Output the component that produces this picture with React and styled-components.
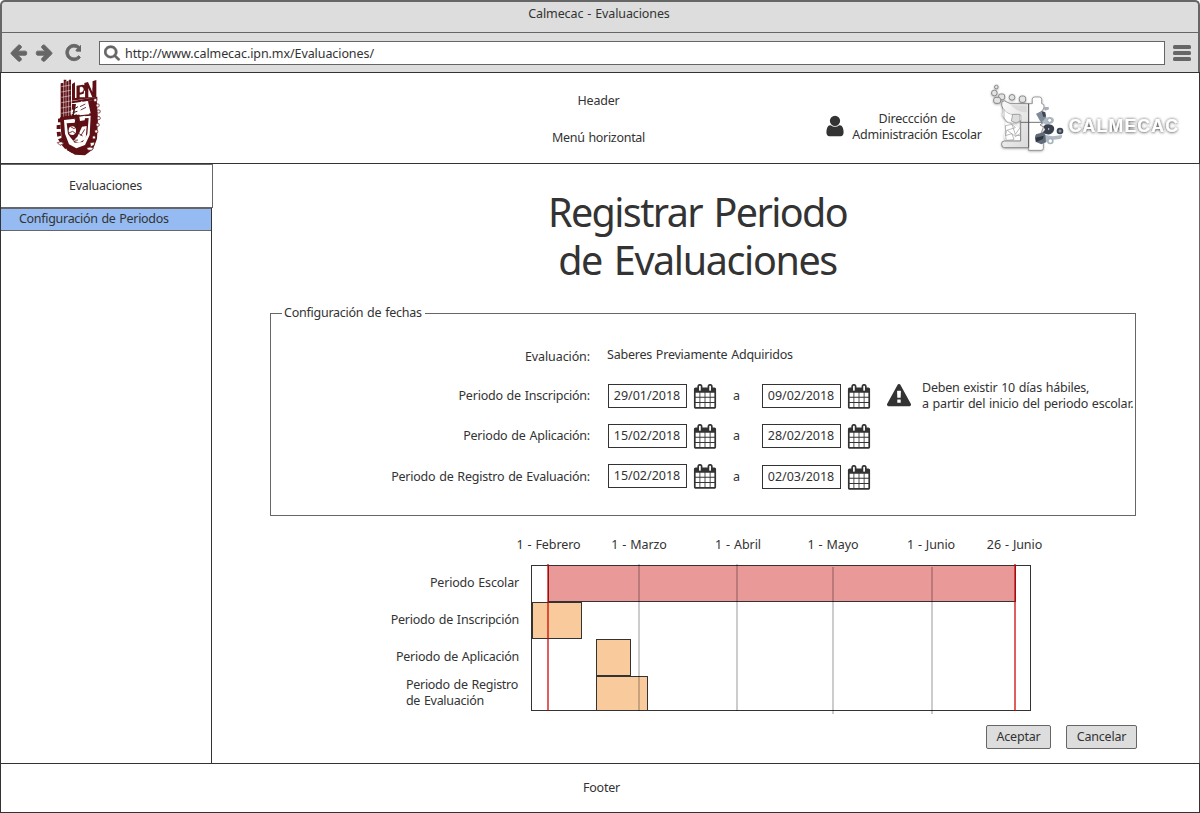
import React from 'react';
import styled, { createGlobalStyle } from 'styled-components';

const INK = '#333333';
const CHROME = '#666666';

const GlobalStyle = createGlobalStyle`
  *, *::before, *::after { box-sizing: border-box; }
  html, body { margin: 0; padding: 0; background: #fff; overflow: hidden; }
  body {
    font-family: "Noto Sans", sans-serif;
    font-size: 12.5px;
    line-height: 16px;
    color: ${INK};
  }
  svg { display: block; flex: none; }
`;

const Window = styled.div`
  width: 1200px;
  height: 813px;
  display: flex;
  flex-direction: column;
`;

const Text = styled.span`
  white-space: nowrap;
  letter-spacing: ${(p) => p.$ls ?? -0.22}px;
  word-spacing: 0.8px;
`;

const Chrome = styled.div`
  height: 72px;
  background: #dddddd;
  border: 2px solid ${CHROME};
  border-bottom: 0;
  border-radius: 5px 5px 0 0;
`;

const TitleBar = styled.div`
  height: 31px;
  border-bottom: 1px solid ${CHROME};
  padding: 4px 2px 0 0;
  display: flex;
  justify-content: center;
  align-items: flex-start;
`;

const Toolbar = styled.div`
  height: 39px;
  padding: 8px 6px 0 7px;
  display: flex;
  align-items: flex-start;
`;

const NavIcons = styled.div`
  width: 90px;
  padding-top: 2px;
  display: flex;
  gap: 7px;
  color: ${CHROME};
`;

const AddressBar = styled.div`
  flex: none;
  width: 1066px;
  height: 24px;
  background: #fff;
  border: 1px solid ${CHROME};
  display: flex;
  align-items: flex-start;
  padding: 3px 0 0 4px;
  color: ${INK};
  gap: 4px;
  & > svg { color: ${CHROME}; }
  & > span { padding-top: 1px; }
`;

const MenuButton = styled.div`
  margin-left: 8px;
  padding-top: 4px;
  display: flex;
  flex-direction: column;
  gap: 2px;
`;

const MenuBar = styled.i`
  width: 18px;
  height: 4px;
  border-radius: 1.5px;
  background: ${CHROME};
`;

const Header = styled.header`
  height: 92px;
  border: 1px solid ${INK};
  display: flex;
  align-items: flex-start;
`;

const LogoSlot = styled.div`
  width: 497px;
  padding: 4px 0 0 54px;
`;

const HeaderTitles = styled.div`
  width: 201px;
  padding-top: 20px;
  display: flex;
  flex-direction: column;
  align-items: center;
  gap: 21px;
`;

const UserBox = styled.div`
  padding: 38px 0 0 124px;
  width: 289px;
  display: flex;
  gap: 6px;
  & > svg { margin-top: 3px; }
`;

const UserName = styled.div`
  display: flex;
  flex-direction: column;
  align-items: center;
  width: 128px;
`;

const BrandSlot = styled.div`
  padding-top: 7px;
`;

const Body = styled.div`
  height: 599px;
  display: flex;
  border-right: 1px solid ${CHROME};
`;

const Sidebar = styled.nav`
  width: 212px;
  height: 599px;
  border-left: 1px solid ${INK};
  border-right: 1px solid ${INK};
`;

const SideHeading = styled.div`
  width: 212px;
  height: 44px;
  background: #fff;
  border: 1px solid ${CHROME};
  border-left: 0;
  display: flex;
  justify-content: center;
  padding: 13px 2px 0 0;
`;

const SideItem = styled.div`
  height: 23px;
  background: #95bbf2;
  border-top: 1px solid ${CHROME};
  border-bottom: 1px solid ${CHROME};
  padding: 2px 0 0 18px;
`;

const Main = styled.main`
  flex: 1;
  padding: 24px 0 0 58px;
`;

const PageTitle = styled.h1`
  margin: 0 0 21px;
  width: 855px;
  font-weight: 400;
  font-size: 39.5px;
  line-height: 48px;
  text-align: center;
`;

const TitleLine = styled.span`
  display: block;
  letter-spacing: ${(p) => p.$ls}px;
  word-spacing: 3px;
`;

const DateFieldset = styled.fieldset`
  width: 866px;
  height: 211px;
  margin: 0;
  padding: 0 0 0 11px;
  border: 1px solid ${CHROME};
  min-width: 0;
`;

const Legend = styled.legend`
  padding: 0 3px 0 2px;
  height: 16px;
`;

const FormRow = styled.div`
  display: flex;
  align-items: flex-start;
  height: ${(p) => p.$h}px;
`;

const FieldLabel = styled.div`
  width: 308px;
  text-align: right;
  padding-top: ${(p) => p.$top ?? 4}px;
`;

const FieldValue = styled.div`
  margin-left: 17px;
  padding-top: 26px;
`;

const DateField = styled.div`
  display: flex;
  gap: 6px;
  margin-left: ${(p) => p.$left}px;
  padding-top: ${(p) => p.$drop ?? 0}px;
`;

const DateInput = styled.div`
  width: 79px;
  height: 24px;
  border: 1px solid ${INK};
  padding: 3px 1px 0 0;
  text-align: center;
`;

const Until = styled.div`
  width: 9px;
  margin-left: 16px;
  padding-top: ${(p) => p.$top ?? 4}px;
`;

const Warning = styled.div`
  display: flex;
  margin-left: 16px;
  gap: 11px;
`;

const WarningText = styled.div`
  display: flex;
  flex-direction: column;
  margin-top: -4px;
`;

const Axis = styled.div`
  display: grid;
  grid-template-columns: 85px 96px 102px 88px 108px 59px;
  margin: 21px 0 11px 236px;
  text-align: center;
`;

const ChartArea = styled.div`
  display: flex;
  gap: 12px;
`;

const ChartLabels = styled.div`
  width: 249px;
  display: flex;
  flex-direction: column;
  align-items: flex-end;
  padding-top: 11px;
  gap: 21px;
`;

const TwoLineLabel = styled.div`
  display: flex;
  flex-direction: column;
  align-items: flex-start;
  margin: -9px 1px 0 0;
`;

const Actions = styled.div`
  display: flex;
  justify-content: flex-end;
  gap: 15px;
  width: 867px;
  margin-top: 11px;
`;

const Button = styled.div`
  width: ${(p) => p.$w}px;
  height: 24px;
  border: 1px solid ${CHROME};
  border-radius: 2px;
  background: #dddddd;
  text-align: center;
  padding-top: 3px;
`;

const Footer = styled.footer`
  height: 50px;
  border: 1px solid ${INK};
  display: flex;
  justify-content: center;
  padding: 16px 0 0 3px;
`;

const PATHS = {
  arrow:
    'M1664 896v128q0 53-32.5 90.5t-84.5 37.5h-704l293 294q38 36 38 90t-38 90l-75 76q-37 37-90 37-52 0-91-37l-651-652q-37-37-37-90 0-52 37-91l651-650q38-38 91-38 52 0 90 38l75 74q38 38 38 91t-38 91l-293 293h704q52 0 84.5 37.5t32.5 90.5z',
  reload:
    'M1664 256v448q0 26-19 45t-45 19h-448q-42 0-59-40-17-39 14-69l138-138q-148-137-349-137-104 0-198.5 40.5t-163.5 109.5-109.5 163.5-40.5 198.5 40.5 198.5 109.5 163.5 163.5 109.5 198.5 40.5q119 0 225-52t179-147q7-10 23-12 15 0 25 9l137 138q9 8 9.5 20.5t-7.5 22.5q-109 132-264 204.5t-327 72.5q-156 0-298-61t-245-164-164-245-61-298 61-298 164-245 245-164 298-61q147 0 284.5 55.5t244.5 156.5l130-129q29-31 70-14 39 17 39 59z',
  search:
    'M1216 832q0-185-131.5-316.5t-316.5-131.5-316.5 131.5-131.5 316.5 131.5 316.5 316.5 131.5 316.5-131.5 131.5-316.5zm512 832q0 52-38 90t-90 38q-54 0-90-38l-343-342q-179 124-399 124-143 0-273.5-55.5t-225-150-150-225-55.5-273.5 55.5-273.5 150-225 225-150 273.5-55.5 273.5 55.5 225 150 150 225 55.5 273.5q0 220-124 399l343 343q37 37 37 90z',
  calendar:
    'M192 1664h288v-288h-288v288zm352 0h320v-288h-320v288zm-352-352h288v-320h-288v320zm352 0h320v-320h-320v320zm-352-384h288v-288h-288v288zm736 736h320v-288h-320v288zm-384-736h320v-288h-320v288zm768 736h288v-288h-288v288zm-384-352h320v-320h-320v320zm-352-864v-288q0-13-9.5-22.5t-22.5-9.5h-64q-13 0-22.5 9.5t-9.5 22.5v288q0 13 9.5 22.5t22.5 9.5h64q13 0 22.5-9.5t9.5-22.5zm736 864h288v-320h-288v320zm-384-384h320v-288h-320v288zm384 0h288v-288h-288v288zm32-480v-288q0-13-9.5-22.5t-22.5-9.5h-64q-13 0-22.5 9.5t-9.5 22.5v288q0 13 9.5 22.5t22.5 9.5h64q13 0 22.5-9.5t9.5-22.5zm384-64v1280q0 52-38 90t-90 38h-1408q-52 0-90-38t-38-90v-1280q0-52 38-90t90-38h128v-96q0-66 47-113t113-47h64q66 0 113 47t47 113v96h384v-96q0-66 47-113t113-47h64q66 0 113 47t47 113v96h128q52 0 90 38t38 90z',
  warning:
    'M1024 1375v-190q0-14-9.5-23.5t-22.5-9.5h-192q-13 0-22.5 9.5t-9.5 23.5v190q0 14 9.5 23.5t22.5 9.5h192q13 0 22.5-9.5t9.5-23.5zm-2-374l18-459q0-12-10-19-13-11-24-11h-220q-11 0-24 11-10 7-10 21l17 457q0 10 10 16.5t24 6.5h185q14 0 23.5-6.5t10.5-16.5zm-14-934l768 1408q35 63-2 126-17 29-46.5 46t-63.5 17h-1536q-34 0-63.5-17t-46.5-46q-37-63-2-126l768-1408q17-31 47-49t65-18 65 18 47 49z',
  user:
    'M1536 1399q0 109-62.5 187t-150.5 78h-854q-88 0-150.5-78t-62.5-187q0-85 8.5-160.5t31.5-152 58.5-131 94-89 134.5-34.5q131 128 313 128t313-128q76 0 134.5 34.5t94 89 58.5 131 31.5 152 8.5 160.5zm-256-887q0 159-112.5 271.5t-271.5 112.5-271.5-112.5-112.5-271.5 112.5-271.5 271.5-112.5 271.5 112.5 112.5 271.5z',
};

const Icon = ({ name, w = 18, h = 18, box = '0 0 1792 1792', flip, bold = 0 }) => (
  <svg width={w} height={h} viewBox={box} fill="currentColor" stroke="currentColor" strokeWidth={bold} strokeLinejoin="round" preserveAspectRatio="none">
    <path d={PATHS[name]} transform={flip ? 'translate(1792 0) scale(-1 1)' : undefined} />
  </svg>
);

const Calendar = () => <Icon name="calendar" w={24} h={25} box="-6 0 1803 1810" />;

const rightTeeth = [[170, 88], [177, 104], [180, 122], [180, 142], [177, 162], [173, 182], [166, 200]];

const IpnLogo = () => (
  <svg width="47" height="80" viewBox="45 21 141 240">
    <g fill="#5e1014">
      {/* tower */}
      <path d="M62 40l9-2v-9h8v6l8-4v-2h6v112l-31 8z" />
      {/* monogram block */}
      <path d="M96 42l9-5v46h4V47l20-3q9 1 8 15-1 11-9 13l-9 2v8h14V39l11-3 13 30V34l12-4v52l-73 10z" />
      <path d="M95 94l77-14v9l-77 11z" />
      {/* gear body */}
      <path d="M60 142l34-4 2-36 12 0-6 34 50-6-8-36 26-8 4 60-3 60-12 32-24 18-30-2-24-14-16-30z" />
      <path d="M54 146l10-2v13h-10zM50 166l12-2v13h-12zM50 186l12-1 1 12-11 3zM54 208l12-5 7 11-10 7zM65 225l11-8 9 10-9 11zM81 240l10-12 10 7-5 14zM103 248l2-14h12l1 15-10 4zM125 250l-2-14 11-3 7 12z" />
      <path d="M142 242l-5-12 10-6 9 10z" />
    </g>
    <g stroke="#fff" strokeWidth="1.5" fill="none">
      <path d="M71 34v106M78 34v104M86 30v108M64 50l28-5M64 66l28-5M64 82l28-5M64 98l28-5M64 114l28-5M64 130l28-5" />
      <path d="M107 46v38M133.500 62v20" strokeWidth="3.500" />
      <path d="M120 52v15l5-1q5-2 5-8t-5-7z" fill="#fff" />
      <path d="M145 54l12 28h-12zM148 34l9 20v-22z" fill="#fff" stroke="none" />
    </g>
    <g fill="#fff">
      <path d="M112 118l4-18 10-7 4 10 10-10 6 28 2 12-28 3-8-10z" />
      <path d="M72 150l34-4-2 12-24 2 4 32 20 26 24-2 14-24 4-48-12 1v-6l18-2-3 58-14 30-26 10-22-12-12-32z" />
      <ellipse cx="97" cy="182" rx="11" ry="13" />
      <path d="M112 200l14-30 14-2-3 38-19 12-18-6z" />
      <path d="M118 140l18-3-2 14-14 2zM92 122l8-4-2 14-6 2z" />
    </g>
    <g fill="none" stroke="#5e1014" strokeWidth="2.5">
      <path d="M84 190l14-6 8 6-6 14M92 170l10 6 12-10M104 150l8-10M120 110l16-8M122 120l16-8M118 166l-2 24 12 8M90 198q10 16 24 12M134 178l-12 20" />
    </g>
    <path d="M100 118l14-8M98 128l14-4M96 140l14-6M108 150l6 8-4 14" fill="none" stroke="#2b1a1a" strokeWidth="3" />
    <g fill="#fff" stroke="#5e1014" strokeWidth="2.2">
      {rightTeeth.map(([x, y]) => (
        <rect key={y} x={x - 9} y={y - 3} width="9" height="9" rx="3" transform={`rotate(-12 ${x} ${y})`} />
      ))}
      <ellipse cx="150" cy="236" rx="9" ry="5" />
      <path d="M150 218l14-2-2 10-10 4zM52 218l12-3 6 6-10 5z" />
    </g>
  </svg>
);

const BrandLogo = () => (
  <svg width="196" height="74" viewBox="24 15 588 222">
    <defs>
      <linearGradient id="stone" x1="0" y1="0" x2="1" y2="1">
        <stop offset="0" stopColor="#fafafa" />
        <stop offset="1" stopColor="#d9d9d9" />
      </linearGradient>
      <filter id="soft" x="-20%" y="-20%" width="140%" height="140%">
        <feDropShadow dx="0" dy="2" stdDeviation="2.4" floodColor="#555" floodOpacity="0.55" />
      </filter>
      <filter id="glow" x="-20%" y="-60%" width="140%" height="220%">
        <feDropShadow dx="0" dy="1" stdDeviation="4" floodColor="#222" floodOpacity="1" />
      </filter>
    </defs>
    <g filter="url(#soft)">
      <g fill="#e2e3e3" stroke="#777" strokeWidth="2.4">
        <circle cx="49" cy="36" r="5.5" />
        <circle cx="43" cy="54" r="8.5" />
        <rect x="56" y="57" width="18" height="17" rx="6" />
        <rect x="41" y="67" width="21" height="18" rx="7" />
        <circle cx="96" cy="67" r="8.5" />
        <rect x="118" y="63" width="19" height="19" rx="7" />
      </g>
      <path
        d="M66 80q8-6 16 2l10 4h54v132H74q-9 0-9-9v-3q0-8 9-8h48v-62q0-14-14-17H92q-14-5-22-15-8-14-4-24z"
        fill="url(#stone)" stroke="#777" strokeWidth="2.4"
      />
      <path d="M146 86h11V73q0-7 7-7h14q7 0 7 7v13q9 0 7 12l-6 10-12 8 6 14 8 12-8 8 10 6-8 22-16 8 4 12 20 4v18q0 6-7 6h-37z" fill="#fff" stroke="#777" strokeWidth="2" />
      <path d="M70 100q10 18 34 20l20 2v14l-26 8-18-4-14-20z" fill="#fff" stroke="#aaa" strokeWidth="1.5" />
      <path d="M98 118h22v20l-12 6-14-6z" fill="#ddd" stroke="#888" strokeWidth="2" />
      <path d="M76 142l12 4 16 6 16 8v36H76l-4-14 6-16z" fill="#fff" />
    </g>
    <path d="M146 86v132M122 142h66" stroke="#4d4d4d" strokeWidth="2.4" fill="none" />
    <path d="M76 152l20-4 10 10-26 8-4 16 20-6 6 18-24 2zM96 148l10 30 14-20M82 166l18 14 20 2M104 186l16-10M72 104v26l10 12" fill="none" stroke="#999" strokeWidth="2" />
    <path d="M92 90l48 2v20q-30 0-48-22z" fill="#d2d2d2" opacity=".7" />
    <g>
      <path d="M168 116l14-6 16 12 2 14-12 10-8-8z" fill="#7e8b98" />
      <path d="M184 108l12 4 2 12-8 2z" fill="#3f4753" />
      <path d="M190 96l16 0 1 7-12 4z" fill="#a4afba" />
      <path d="M186 140l10-10q14-10 24 0 5 9-4 15l-18 6z" fill="#b0bac3" />
      <circle cx="209" cy="136" r="6" fill="#fff" stroke="#8a97a4" strokeWidth="2" />
      <path d="M190 154q10-10 26-4 10 6 5 18-6 12-20 10l-14-4 8-10z" fill="#39414e" />
      <circle cx="206" cy="162" r="2" fill="#fff" />
      <path d="M168 178l22-6 10 12-2 18-14 6-14-6q-9-12-2-24z" fill="#5f6b79" />
      <path d="M167 188l24-6-2 10-22 10z" fill="#2f3641" />
      <path d="M196 180l22 4 28-4q2 8-6 12l-20 2-22 8z" fill="#b0bac3" />
      <circle cx="240" cy="168" r="10" fill="#3b434e" />
      <circle cx="240" cy="168" r="4.5" fill="#89939d" />
      <circle cx="211" cy="198" r="7.5" fill="#fff" stroke="#a7b3bf" strokeWidth="5" />
    </g>
    <text
      x="266" y="171" fontFamily="Liberation Sans, Arial, sans-serif" fontWeight="700" fontSize="53"
      textLength="328" lengthAdjust="spacing" fill="#fff" filter="url(#glow)"
    >
      CALMECAC
    </text>
  </svg>
);

const Gantt = () => (
  <svg width="500" height="150" viewBox="531 564 500 150" shapeRendering="crispEdges">
    <rect x="531.5" y="565.5" width="499" height="145" fill="none" stroke={INK} />
    <rect x="548.5" y="565.5" width="467" height="36" fill="#ea9999" stroke={INK} />
    <g fill="#f9cb9c" stroke={INK}>
      <rect x="532.5" y="602.5" width="49" height="36" />
      <rect x="596.5" y="639.5" width="34" height="36" />
      <rect x="596.5" y="676.5" width="51" height="34" />
    </g>
    <g fill="#000" fillOpacity="0.2">
      <rect x="638" y="564" width="2" height="147" />
      <rect x="736" y="564" width="2" height="147" />
      <rect x="832" y="567" width="2" height="147" />
      <rect x="931" y="567" width="2" height="147" />
    </g>
    <g fill="#cc0000" fillOpacity="0.63">
      <rect x="547" y="564" width="2" height="147" />
      <rect x="1014" y="564" width="2" height="147" />
    </g>
  </svg>
);

const periods = [
  { label: 'Periodo de Inscripción:', from: '29/01/2018', to: '09/02/2018', warn: true },
  { label: 'Periodo de Aplicación:', from: '15/02/2018', to: '28/02/2018' },
  { label: 'Periodo de Registro de Evaluación:', from: '15/02/2018', to: '02/03/2018', drop: 1 },
];

const months = ['1 - Febrero', '1 - Marzo', '1 - Abril', '1 - Mayo', '1 - Junio', '26 - Junio'];

export default function App() {
  return (
    <Window>
      <GlobalStyle />
      <Chrome>
        <TitleBar><Text $ls={-0.1}>Calmecac - Evaluaciones</Text></TitleBar>
        <Toolbar>
          <NavIcons>
            <Icon name="arrow" w={19} h={19} bold={90} />
            <Icon name="arrow" w={19} h={19} bold={90} flip />
            <Icon name="reload" w={20} h={19} box="-330 0 1886 1792" bold={90} />
          </NavIcons>
          <AddressBar>
            <Icon name="search" w={17} h={16} box="60 60 1792 1792" bold={40} />
            <Text $ls={-0.08}>http://www.calmecac.ipn.mx/Evaluaciones/</Text>
          </AddressBar>
          <MenuButton><MenuBar /><MenuBar /><MenuBar /></MenuButton>
        </Toolbar>
      </Chrome>

      <Header>
        <LogoSlot><IpnLogo /></LogoSlot>
        <HeaderTitles>
          <Text>Header</Text>
          <Text $ls={-0.3}>Menú horizontal</Text>
        </HeaderTitles>
        <UserBox>
          <Icon name="user" w={24} h={24} />
          <UserName>
            <Text>Direccción de</Text>
            <Text>Administración Escolar</Text>
          </UserName>
        </UserBox>
        <BrandSlot><BrandLogo /></BrandSlot>
      </Header>

      <Body>
        <Sidebar>
          <SideHeading><Text>Evaluaciones</Text></SideHeading>
          <SideItem><Text $ls={-0.3}>Configuración de Periodos</Text></SideItem>
        </Sidebar>
        <Main>
          <PageTitle>
            <TitleLine $ls={-1.62}>Registrar Periodo</TitleLine>
            <TitleLine $ls={-1.38}>de Evaluaciones</TitleLine>
          </PageTitle>
          <DateFieldset>
            <Legend><Text $ls={-0.25}>Configuración de fechas</Text></Legend>
            <FormRow $h={63}>
              <FieldLabel $top={28}><Text $ls={-0.1}>Evaluación:</Text></FieldLabel>
              <FieldValue><Text>Saberes Previamente Adquiridos</Text></FieldValue>
            </FormRow>
            {periods.map((p) => (
              <FormRow key={p.label} $h={40}>
                <FieldLabel $top={4 + (p.drop ?? 0)}><Text>{p.label}</Text></FieldLabel>
                <DateField $left={18}>
                  <DateInput><Text $ls={0}>{p.from}</Text></DateInput>
                  <Calendar />
                </DateField>
                <Until $top={4 + (p.drop ?? 0)}><Text>a</Text></Until>
                <DateField $left={20} $drop={p.drop}>
                  <DateInput><Text $ls={0}>{p.to}</Text></DateInput>
                  <Calendar />
                </DateField>
                {p.warn && (
                  <Warning>
                    <Icon name="warning" w={24} h={24} />
                    <WarningText>
                      <Text>Deben existir 10 días hábiles,</Text>
                      <Text>a partir del inicio del periodo escolar.</Text>
                    </WarningText>
                  </Warning>
                )}
              </FormRow>
            ))}
          </DateFieldset>

          <Axis>{months.map((m) => <Text key={m} $ls={-0.08}>{m}</Text>)}</Axis>
          <ChartArea>
            <ChartLabels>
              <Text $ls={-0.18}>Periodo Escolar</Text>
              <Text>Periodo de Inscripción</Text>
              <Text $ls={-0.25}>Periodo de Aplicación</Text>
              <TwoLineLabel>
                <Text $ls={-0.28}>Periodo de Registro</Text>
                <Text $ls={-0.28}>de Evaluación</Text>
              </TwoLineLabel>
            </ChartLabels>
            <Gantt />
          </ChartArea>
          <Actions>
            <Button $w={65}><Text>Aceptar</Text></Button>
            <Button $w={71}><Text>Cancelar</Text></Button>
          </Actions>
        </Main>
      </Body>

      <Footer><Text>Footer</Text></Footer>
    </Window>
  );
}
